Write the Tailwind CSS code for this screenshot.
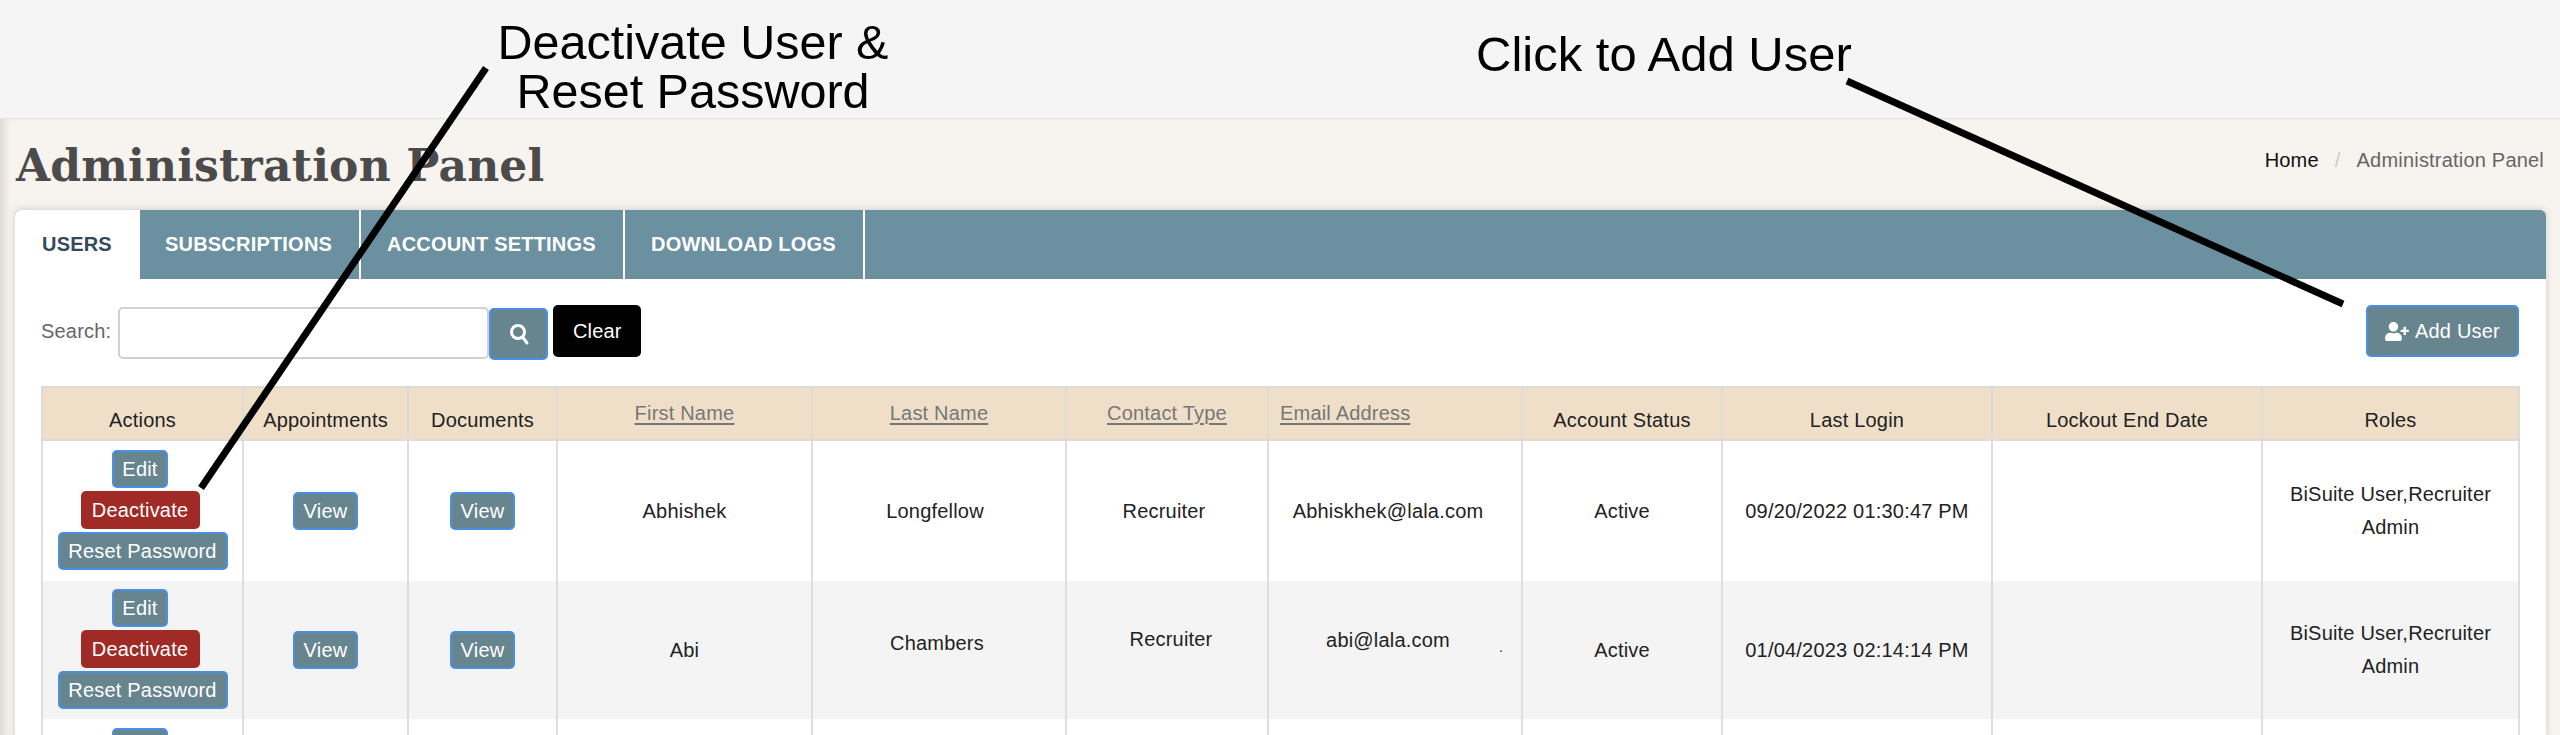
<!DOCTYPE html>
<html lang="en">
<head>
    <meta charset="UTF-8">
    <title>Administration Panel</title>
    <script src="https://cdn.jsdelivr.net/npm/@tailwindcss/browser@4"></script>
</head>
<body class="relative h-[735px] overflow-hidden bg-[#f7f3ee] font-['Liberation_Sans',Arial,sans-serif] text-[20px] tracking-[0.2px] text-[#222]">
    <!-- Top bar -->
    <div class="h-[119px] bg-[#f5f5f5] border-b border-[#e6e3df]"></div>

    <!-- Main -->
    <div class="pl-[15px] pr-[14px] h-[616px] shadow-[inset_9px_0_8px_-5px_rgba(0,0,0,0.12)]">
        <div class="flex justify-between h-[91px]">
            <h1 class="pt-[15px] pl-[1px] font-['DejaVu_Serif',serif] font-bold text-[44px] leading-[64px] tracking-[0.2px] text-[#4b4b4b]">Administration Panel</h1>
            <div class="flex gap-[16px] pt-[29px] pr-[2px] leading-[24px]">
                <a class="text-[#111]">Home</a>
                <span class="text-[#ccc]">/</span>
                <span class="text-[#666]">Administration Panel</span>
            </div>
        </div>

        <div class="bg-white rounded-t-[6px] h-[600px] shadow-[0_-2px_10px_rgba(0,0,0,0.08),0_0_6px_rgba(0,0,0,0.08)]">
            <!-- Tabs -->
            <div class="flex h-[69px] bg-[#6b91a1] rounded-t-[6px] font-bold text-white">
                <div class="w-[125px] bg-white text-[#34495a] rounded-tl-[6px] pl-[27px] leading-[69px]">USERS</div>
                <div class="w-[221px] border-r-2 border-white pl-[25px] leading-[69px]">SUBSCRIPTIONS</div>
                <div class="w-[264px] border-r-2 border-white pl-[26px] leading-[69px]">ACCOUNT SETTINGS</div>
                <div class="w-[240px] border-r-2 border-white pl-[26px] leading-[69px]">DOWNLOAD LOGS</div>
            </div>

            <div class="pl-[26px] pr-[27px]">
                <!-- Search row -->
                <div class="flex items-start justify-between pt-[26px]">
                    <div class="flex items-start">
                        <label class="text-[#666] leading-[52px] mr-[7px]">Search:</label>
                        <input type="text" class="w-[371px] h-[52px] mt-[2px] border-2 border-[#d0d0d0] rounded-[5px] bg-white">
                        <button class="flex items-center justify-center w-[59px] h-[52px] mt-[3px] bg-[#67858f] border-2 border-[#4a90e2] rounded-[5px]">
                            <svg class="w-[22px] h-[24px]" viewBox="0 0 22 24" fill="none" stroke="white" stroke-width="3" stroke-linecap="round"><circle cx="10" cy="10" r="6.5"/><line x1="15" y1="15.5" x2="19" y2="21"/></svg>
                        </button>
                        <button class="w-[88px] h-[52px] ml-[5px] bg-black rounded-[5px] text-white">Clear</button>
                    </div>
                    <button class="flex items-center justify-center gap-[6px] w-[153px] h-[52px] bg-[#67858f] border-2 border-[#4a90e2] rounded-[5px] text-white">
                        <svg class="w-[24px] h-[19px]" viewBox="0 0 640 512" fill="white"><path d="M624 208h-64v-64c0-8.800-7.200-16-16-16h-32c-8.800 0-16 7.200-16 16v64h-64c-8.800 0-16 7.200-16 16v32c0 8.800 7.200 16 16 16h64v64c0 8.800 7.200 16 16 16h32c8.800 0 16-7.200 16-16v-64h64c8.800 0 16-7.200 16-16v-32c0-8.800-7.200-16-16-16zm-400 48c70.700 0 128-57.300 128-128S294.700 0 224 0 96 57.300 96 128s57.300 128 128 128zm89.600 32h-16.700c-22.200 10.200-46.900 16-72.900 16s-50.600-5.800-72.900-16h-16.700C60.200 288 0 348.200 0 422.400V464c0 26.500 21.500 48 48 48h352c26.500 0 48-21.500 48-48v-41.600c0-74.200-60.200-134.400-134.400-134.400z"/></svg>
                        Add User
                    </button>
                </div>

                <!-- Users table -->
                <table class="table-fixed border-collapse w-[2477px] mt-[26px] text-center">
                    <colgroup>
                        <col class="w-[201px]"><col class="w-[165px]"><col class="w-[149px]"><col class="w-[255px]"><col class="w-[254px]"><col class="w-[202px]"><col class="w-[254px]"><col class="w-[200px]"><col class="w-[270px]"><col class="w-[270px]"><col class="w-[257px]">
                    </colgroup>
                    <thead>
                        <tr class="h-[53px] bg-[#efdfc8] font-normal">
                            <th class="border-2 border-[#dedbd6] pt-[13px] font-normal">Actions</th>
                            <th class="border-2 border-[#dedbd6] pt-[13px] font-normal">Appointments</th>
                            <th class="border-2 border-[#dedbd6] pt-[13px] font-normal">Documents</th>
                            <th class="border-2 border-[#dedbd6] pb-[1px] font-normal text-[#777] underline decoration-2 underline-offset-[3px]">First Name</th>
                            <th class="border-2 border-[#dedbd6] pb-[1px] font-normal text-[#777] underline decoration-2 underline-offset-[3px]">Last Name</th>
                            <th class="border-2 border-[#dedbd6] pb-[1px] font-normal text-[#777] underline decoration-2 underline-offset-[3px]">Contact Type</th>
                            <th class="border-2 border-[#dedbd6] pb-[1px] pl-[11px] text-left font-normal text-[#777] underline decoration-2 underline-offset-[3px]">Email Address</th>
                            <th class="border-2 border-[#dedbd6] pt-[13px] font-normal">Account Status</th>
                            <th class="border-2 border-[#dedbd6] pt-[13px] font-normal">Last Login</th>
                            <th class="border-2 border-[#dedbd6] pt-[13px] font-normal">Lockout End Date</th>
                            <th class="border-2 border-[#dedbd6] pt-[13px] font-normal">Roles</th>
                        </tr>
                    </thead>
                    <tbody>
                        <tr class="h-[141px]">
                            <td class="border-x-2 border-[#dedede] pb-[2px]">
                                <div class="flex flex-col items-center gap-[3px]">
                                    <button class="w-[56px] h-[38px] mr-[5px] bg-[#67858f] border-2 border-[#4a90e2] rounded-[5px] text-white">Edit</button>
                                    <button class="w-[119px] h-[38px] mr-[5px] bg-[#a02a25] rounded-[5px] text-white">Deactivate</button>
                                    <button class="w-[170px] h-[38px] bg-[#67858f] border-2 border-[#4a90e2] rounded-[5px] text-white">Reset Password</button>
                                </div>
                            </td>
                            <td class="border-x-2 border-[#dedede]"><button class="w-[65px] h-[38px] bg-[#67858f] border-2 border-[#4a90e2] rounded-[5px] text-white">View</button></td>
                            <td class="border-x-2 border-[#dedede]"><button class="w-[65px] h-[38px] bg-[#67858f] border-2 border-[#4a90e2] rounded-[5px] text-white">View</button></td>
                            <td class="border-x-2 border-[#dedede]">Abhishek</td>
                            <td class="border-x-2 border-[#dedede] pr-[8px]">Longfellow</td>
                            <td class="border-x-2 border-[#dedede] pr-[6px]">Recruiter</td>
                            <td class="border-x-2 border-[#dedede] pr-[14px]">Abhiskhek@lala.com</td>
                            <td class="border-x-2 border-[#dedede]">Active</td>
                            <td class="border-x-2 border-[#dedede]">09/20/2022 01:30:47 PM</td>
                            <td class="border-x-2 border-[#dedede]"></td>
                            <td class="border-x-2 border-[#dedede] leading-[33px]">BiSuite User,Recruiter<br>Admin</td>
                        </tr>
                        <tr class="h-[138px] bg-[#f4f4f4]">
                            <td class="border-x-2 border-[#dedede] pb-[2px]">
                                <div class="flex flex-col items-center gap-[3px]">
                                    <button class="w-[56px] h-[38px] mr-[5px] bg-[#67858f] border-2 border-[#4a90e2] rounded-[5px] text-white">Edit</button>
                                    <button class="w-[119px] h-[38px] mr-[5px] bg-[#a02a25] rounded-[5px] text-white">Deactivate</button>
                                    <button class="w-[170px] h-[38px] bg-[#67858f] border-2 border-[#4a90e2] rounded-[5px] text-white">Reset Password</button>
                                </div>
                            </td>
                            <td class="border-x-2 border-[#dedede]"><button class="w-[65px] h-[38px] bg-[#67858f] border-2 border-[#4a90e2] rounded-[5px] text-white">View</button></td>
                            <td class="border-x-2 border-[#dedede]"><button class="w-[65px] h-[38px] bg-[#67858f] border-2 border-[#4a90e2] rounded-[5px] text-white">View</button></td>
                            <td class="border-x-2 border-[#dedede]">Abi</td>
                            <td class="border-x-2 border-[#dedede] pb-[14px] pr-[4px]">Chambers</td>
                            <td class="border-x-2 border-[#dedede] pb-[22px] pl-[8px]">Recruiter</td>
                            <td class="relative border-x-2 border-[#dedede] pb-[20px] pr-[14px]">abi@lala.com<span class="absolute left-[230px] top-[56px] text-[14px] text-[#333]">.</span></td>
                            <td class="border-x-2 border-[#dedede]">Active</td>
                            <td class="border-x-2 border-[#dedede]">01/04/2023 02:14:14 PM</td>
                            <td class="border-x-2 border-[#dedede]"></td>
                            <td class="border-x-2 border-[#dedede] leading-[33px]">BiSuite User,Recruiter<br>Admin</td>
                        </tr>
                        <tr class="h-[141px]">
                            <td class="border-x-2 border-[#dedede] align-top pt-[9px]">
                                <div class="flex flex-col items-center">
                                    <button aria-label="Edit" class="w-[56px] h-[38px] mr-[5px] bg-[#67858f] border-2 border-[#4a90e2] rounded-[5px]"></button>
                                </div>
                            </td>
                            <td class="border-x-2 border-[#dedede]"></td>
                            <td class="border-x-2 border-[#dedede]"></td>
                            <td class="border-x-2 border-[#dedede]"></td>
                            <td class="border-x-2 border-[#dedede]"></td>
                            <td class="border-x-2 border-[#dedede]"></td>
                            <td class="border-x-2 border-[#dedede]"></td>
                            <td class="border-x-2 border-[#dedede]"></td>
                            <td class="border-x-2 border-[#dedede]"></td>
                            <td class="border-x-2 border-[#dedede]"></td>
                            <td class="border-x-2 border-[#dedede]"></td>
                        </tr>
                    </tbody>
                </table>
            </div>
        </div>
    </div>

    <!-- Annotations drawn over the page -->
    <div class="absolute left-[493px] top-[18px] w-[400px] text-center text-[48.500px] leading-[49px] tracking-normal text-black">Deactivate User &amp;<br>Reset Password</div>
    <div class="absolute left-[1476px] top-[28px] text-[49px] leading-[52px] tracking-normal text-black">Click to Add User</div>
    <svg class="absolute left-0 top-0 pointer-events-none" width="2560" height="735" viewBox="0 0 2560 735" stroke="black" stroke-width="7">
        <line x1="486" y1="68" x2="201" y2="488"/>
        <line x1="1847" y1="81" x2="2343" y2="304"/>
    </svg>
</body>
</html>
